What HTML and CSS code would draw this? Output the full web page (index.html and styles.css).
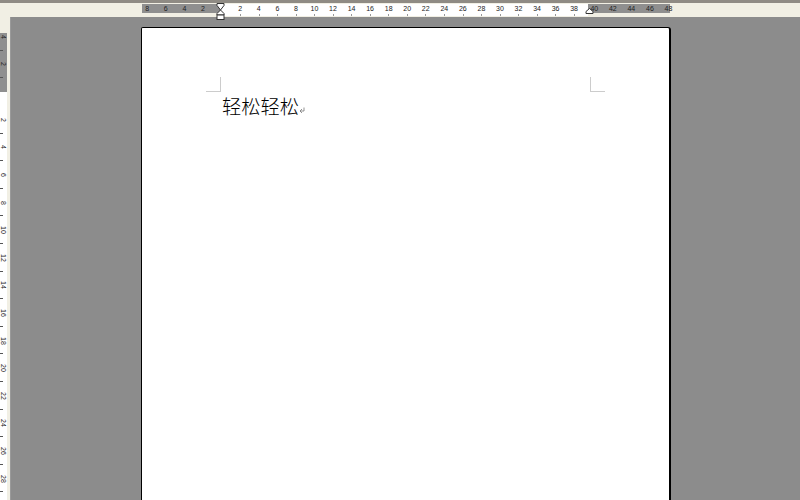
FILE: index.html
```html
<!DOCTYPE html>
<html lang="zh">
<head>
<meta charset="utf-8">
<title>轻松轻松</title>
<link rel="stylesheet" href="styles.css">
</head>
<body>
<div class="app">
  <div class="topstrip"></div>
  <div class="hbar">
    <div class="hruler">
      <div class="hzone grey left"><span>8</span><span>6</span><span>4</span><span>2</span></div>
      <div class="hzone white"><span></span><span>2</span><span>4</span><span>6</span><span>8</span><span>10</span><span>12</span><span>14</span><span>16</span><span>18</span><span>20</span><span>22</span><span>24</span><span>26</span><span>28</span><span>30</span><span>32</span><span>34</span><span>36</span><span>38</span></div>
      <div class="hzone grey right"><span>40</span><span>42</span><span>44</span><span>46</span><span>48</span></div>
      <svg class="indent first" width="9" height="18" viewBox="0 0 9 18"><path d="M1 .5h7v2L4.500 7 1 2.500z" fill="#fff" stroke="#333"/><path d="M4.500 7 8 10.500V12H1v-1.500z" fill="#fff" stroke="#333"/><rect x="1" y="12" width="7" height="4.500" fill="#fff" stroke="#333"/></svg>
      <svg class="indent last" width="9" height="6" viewBox="0 0 9 6"><path d="M4.500 .5 8 3.500v2H1v-2z" fill="#fff" stroke="#333"/></svg>
    </div>
  </div>
  <div class="main">
    <div class="vruler">
      <div class="vzone grey"><span>4</span><span>2</span></div>
      <div class="vzone white"><span>2</span><span>4</span><span>6</span><span>8</span><span>10</span><span>12</span><span>14</span><span>16</span><span>18</span><span>20</span><span>22</span><span>24</span><span>26</span><span>28</span></div>
    </div>
    <div class="edge"></div>
    <div class="workspace">
      <div class="page">
        <div class="marks">
          <i class="mark mark-left"></i>
          <i class="mark mark-right"></i>
        </div>
        <p class="doc-text">轻松轻松<svg class="para" width="6" height="7" viewBox="0 0 6 7"><path d="M5 .5V4H1M3 2 1 4l2 2" fill="none" stroke="#777" stroke-width=".8"/></svg></p>
      </div>
    </div>
  </div>
</div>
</body>
</html>
```
FILE: styles.css
```css
* { box-sizing: border-box; }
html, body { margin: 0; padding: 0; height: 100%; overflow: hidden; }
body { background: #8c8c8c; font-family: "Liberation Sans", sans-serif; }
.app { width: 800px; height: 500px; display: flex; flex-direction: column; overflow: hidden; }

.topstrip { height: 3px; flex: none; background: #8f8b84; }
.hbar { height: 14px; flex: none; background: #f1efe4; padding-left: 142px; }
.hruler { position: relative; display: flex; width: 528px; height: 12px; margin-top: 1px; }
.hzone { display: flex; }
.hzone.grey { height: 9px; background: #8f8f8f; }
.hzone.white { height: 12px; background: #fff; }
.hzone.left { width: 78px; margin-left: 0; }
.hzone.white { width: 368px; }
.hzone.right { width: 82px; }
.hzone span {
  flex: none;
  width: 18.56px;
  font-size: 7px;
  line-height: 9px;
  text-align: center;
  color: #222;
  position: relative;
}
.hzone.white span::after {
  content: "";
  position: absolute;
  left: 9px;
  top: 10px;
  width: 1px;
  height: 2px;
  background: #999;
}
.hzone.white span:first-child::after { display: none; }
.hzone.left span:first-child { margin-left: -4px; }
.hzone.white span:first-child { width: 11px; }
.hzone.right span:first-child { margin-left: -3px; }
.indent { position: absolute; }
.indent.first { left: 74px; top: -1px; }
.indent.last { left: 443px; top: 4px; }

.main { flex: 1; display: flex; min-height: 0; }
.vruler { width: 7px; flex: none; background: #f1efe4; display: flex; flex-direction: column; }
.vzone { display: flex; flex-direction: column; flex: none; overflow: hidden; }
.vzone.grey { height: 59px; background: #8f8f8f; margin-top: 16px; }
.vzone.grey span:first-child { margin-top: -10px; }
.vzone.white { height: 420px; background: #fff; padding-top: 14px; }
.vzone span {
  flex: none;
  display: flex;
  align-items: center;
  justify-content: center;
  width: 7px;
  height: 27.6px;
  font-size: 7px;
  color: #222;
  writing-mode: vertical-rl;
  position: relative;
}
.vzone span::after {
  content: "";
  position: absolute;
  left: 0;
  bottom: 0;
  width: 3px;
  height: 1px;
  background: #555;
}
.edge { width: 3px; flex: none; background: #f1efe4; }
.workspace { flex: 1; background: #8c8c8c; padding: 10px 0 0 130px; border-left: 1px solid #9a9a9a; overflow: hidden; }

.page {
  width: 530px;
  height: 600px;
  background: #fff;
  border: 1px solid #000;
  border-right-width: 2px;
  border-bottom: 0;
  border-radius: 2px 3px 0 0;
  padding: 49px 0 0 64px;
}
.marks { display: flex; justify-content: space-between; width: 399px; height: 15px; }
.mark { display: block; width: 15px; height: 15px; border: 0 solid #ccc; }
.mark-left { border-right-width: 1px; border-bottom-width: 1px; }
.mark-right { border-left-width: 1px; border-bottom-width: 1px; }
.doc-text {
  margin: 1px 0 0 16px;
  font-family: "Noto Sans CJK SC", sans-serif;
  font-weight: 300;
  font-size: 19.3px;
  line-height: 26px;
  color: #000;
  display: flex;
  align-items: flex-end;
}
.para { margin: 0 0 5px 0; }
```
